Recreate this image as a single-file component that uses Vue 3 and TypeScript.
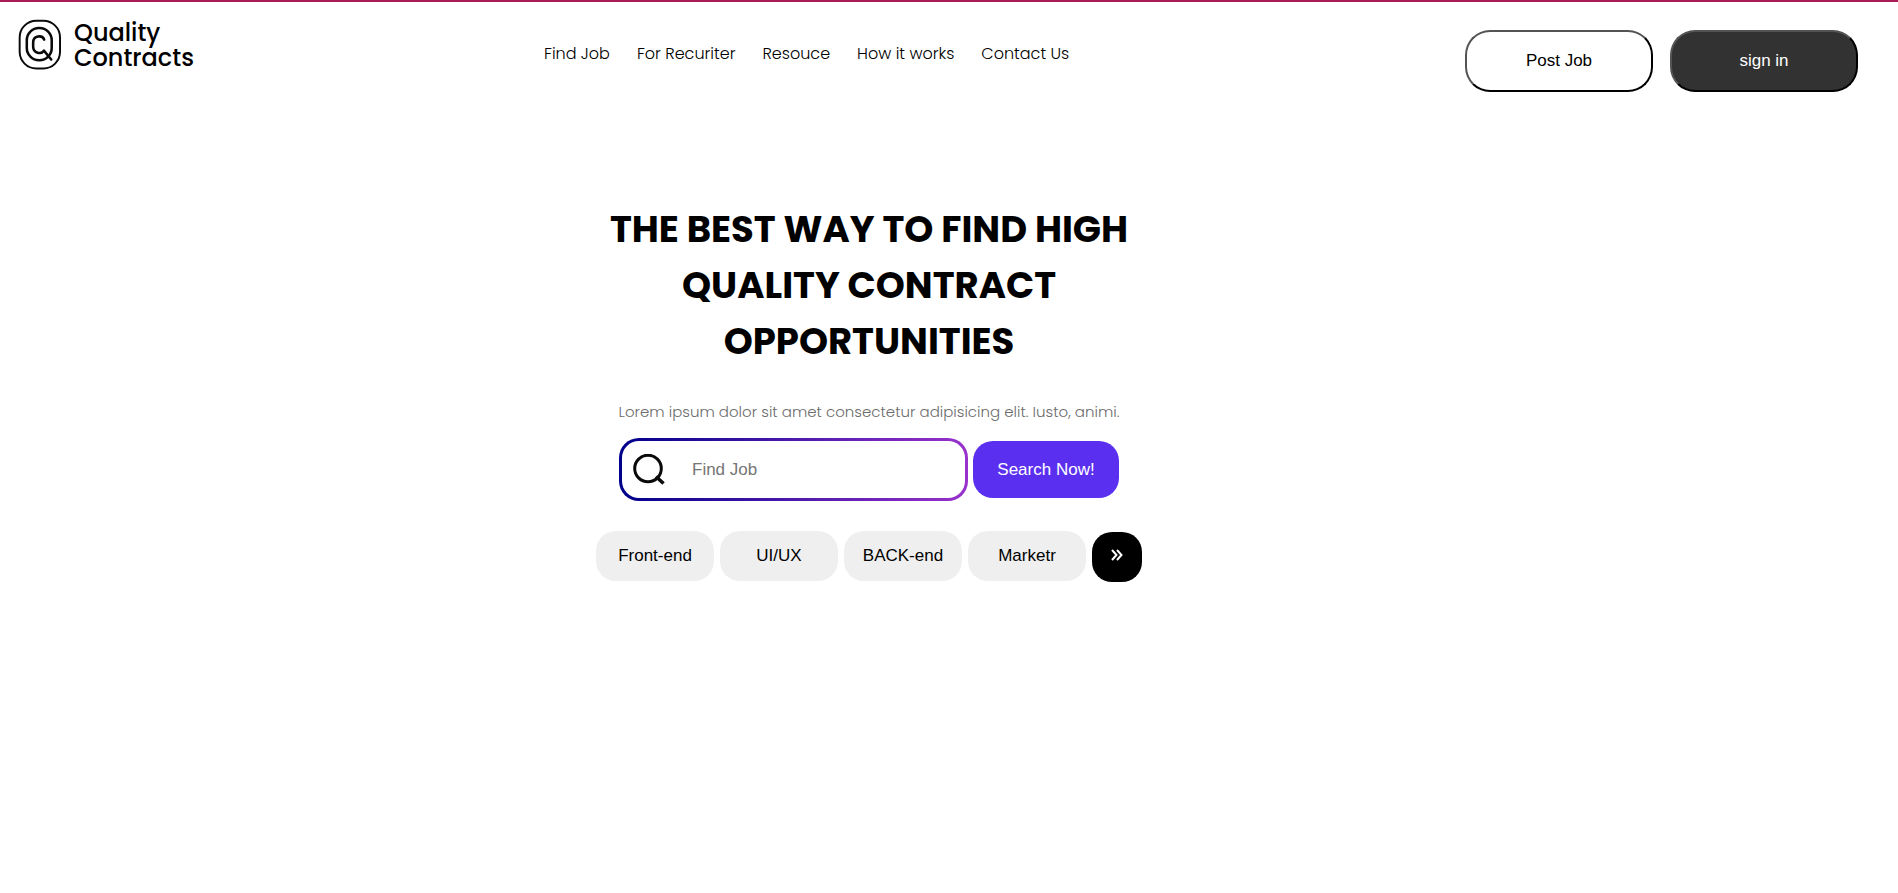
<script setup lang="ts">
import { ref } from 'vue'

const links: string[] = ['Find Job', 'For Recuriter', 'Resouce', 'How it works', 'Contact Us']
const categories: string[] = ['Front-end', 'UI/UX', 'BACK-end', 'Marketr']
const query = ref('')
</script>

<template>
  <div class="page">
    <header class="header">
      <a class="logo" href="#">
        <svg class="logo-mark" viewBox="0 0 44 52" fill="none" stroke="#0a0a0a" aria-hidden="true">
          <rect x="1.700" y="1.200" width="41.300" height="48.800" rx="17" stroke-width="2" />
          <rect x="9" y="8.600" width="25.500" height="33" rx="12.500" stroke-width="2.600" />
          <path d="M26.800 20.500 C25 15.500 15.500 16 15.500 23.500 V27.500 C15.500 35 24 35.500 26.500 31.800 L34 40.800" stroke-width="2.600" stroke-linecap="round" stroke-linejoin="round" />
        </svg>
        <span class="logo-text">Quality<br />Contracts</span>
      </a>
      <nav class="nav" aria-label="Main">
        <a v-for="link in links" :key="link" href="#">{{ link }}</a>
      </nav>
      <div class="actions">
        <button class="action" type="button">Post Job</button>
        <button class="action dark" type="button">sign in</button>
      </div>
    </header>

    <main class="hero">
      <h1>THE BEST WAY TO FIND HIGH QUALITY CONTRACT OPPORTUNITIES</h1>
      <p>Lorem ipsum dolor sit amet consectetur adipisicing elit. Iusto, animi.</p>
      <form class="search" @submit.prevent>
        <label class="field">
          <svg viewBox="0 0 32 32" fill="none" stroke="#0a0a0a" stroke-width="3" aria-hidden="true">
            <circle cx="15" cy="14.500" r="13.300" />
            <path d="M23 22.500 L30.500 29.500" stroke-width="3.500" />
          </svg>
          <input v-model="query" type="text" placeholder="Find Job" aria-label="Find Job" />
        </label>
        <button class="submit" type="submit">Search Now!</button>
      </form>
      <div class="categories">
        <button v-for="category in categories" :key="category" class="chip" type="button">{{ category }}</button>
        <button class="more" type="button" aria-label="More categories">
          <svg viewBox="0 0 12 12" fill="none" stroke="#fff" stroke-width="2" aria-hidden="true">
            <path d="M1 1 L5.500 6 L1 11 M6 1 L10.500 6 L6 11" />
          </svg>
        </button>
      </div>
    </main>
  </div>
</template>

<style>
body {
  background: #fff;
}
</style>

<style scoped>
.page {
  border-top: 2px solid #a81c58;
  color: #000;
  font-family: Poppins, Inter, sans-serif;
}

.header {
  display: flex;
  align-items: flex-start;
  padding: 16px 40px 0 18px;
}

a {
  color: inherit;
  text-decoration: none;
}

.logo {
  display: flex;
  gap: 13px;
  width: 176px;
}

.logo-mark {
  width: 44px;
  height: 52px;
  margin-top: 1px;
}

.logo-text {
  padding-top: 2px;
  font-size: 24px;
  font-weight: 500;
  line-height: 25px;
}

.nav {
  display: flex;
  gap: 27px;
  margin: 24px 0 0 350px;
  font-size: 16px;
  font-weight: 300;
  line-height: 24px;
  white-space: nowrap;
}

.actions {
  display: flex;
  gap: 17px;
  margin: 12px 0 0 auto;
}

button,
input {
  font-family: "Liberation Sans", Arial, sans-serif;
  font-size: 17px;
}

.action {
  width: 188px;
  height: 62px;
  border: 2px outset #000;
  border-radius: 25px;
  background: #fff;
  color: #000;
}

.dark {
  background: #323232;
  color: #fff;
}

.hero {
  display: flex;
  flex-direction: column;
  align-items: center;
  padding: 109px 160px 0 0;
}

h1 {
  width: 546px;
  margin: 0;
  font-size: 37px;
  font-weight: 700;
  line-height: 56px;
  text-align: center;
}

p {
  margin: 31px 0 0;
  color: #6c6c6c;
  font-size: 15px;
  font-weight: 300;
  line-height: 24px;
}

.search {
  display: flex;
  align-items: center;
  gap: 5px;
  margin-top: 14px;
}

.field {
  display: flex;
  align-items: center;
  gap: 27px;
  box-sizing: border-box;
  width: 349px;
  height: 63px;
  padding: 0 11px;
  border: 3px solid transparent;
  border-radius: 20px;
  background:
    linear-gradient(#fff, #fff) padding-box,
    linear-gradient(to right, darkblue, darkorchid) border-box;
}

.field svg {
  flex: none;
  width: 32px;
  height: 32px;
}

.field input {
  flex: 1;
  min-width: 0;
  padding: 0;
  border: 0;
  outline: 0;
  background: transparent;
}

.field input::placeholder {
  color: #757575;
}

.submit {
  width: 146px;
  height: 57px;
  border: 0;
  border-radius: 20px;
  background: #5a2ff0;
  color: #fff;
}

.categories {
  display: flex;
  gap: 6px;
  margin-top: 30px;
}

.chip {
  width: 118px;
  height: 50px;
  padding: 0;
  border: 0;
  border-radius: 20px;
  background: #efefef;
  color: #000;
}

.more {
  display: flex;
  align-items: center;
  justify-content: center;
  box-sizing: border-box;
  width: 50px;
  height: 50px;
  margin-top: 1px;
  padding: 0 0 4px;
  border: 0;
  border-radius: 20px;
  background: #000;
}

.more svg {
  width: 12px;
  height: 12px;
}
</style>
